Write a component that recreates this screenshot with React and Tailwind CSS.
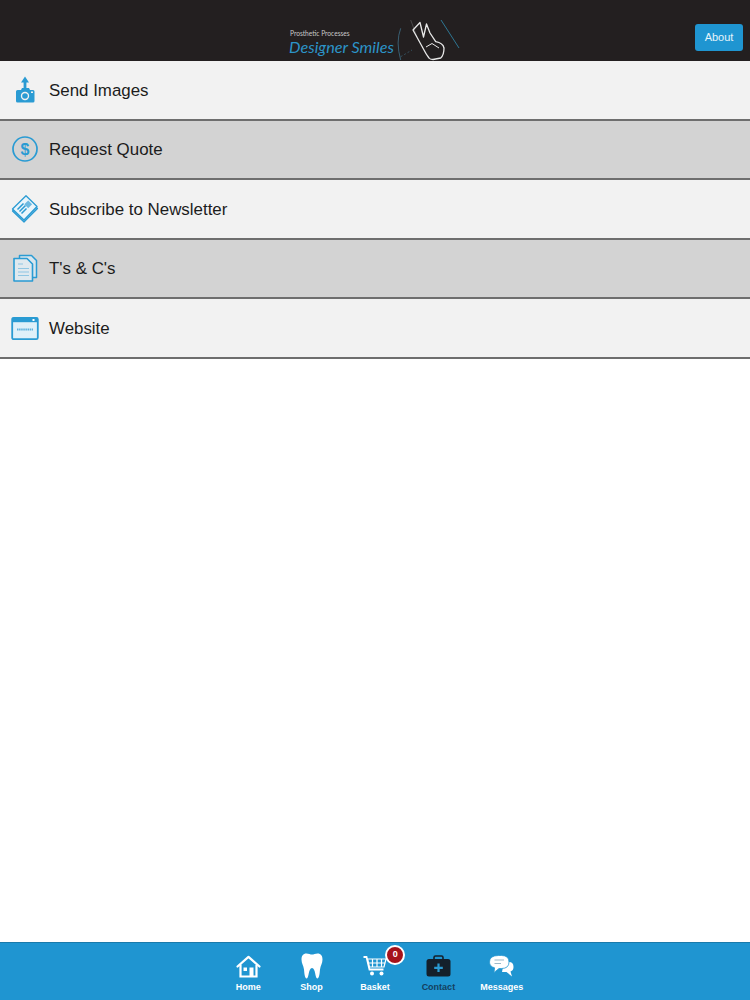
const BLUE = '#2a9bd3';

const CameraIcon = () => (
  <svg width="28" height="28" viewBox="0 0 28 28">
    <path d="M14 0.5 L18 6.5 H15.4 V12 H12.6 V6.5 H10 Z" fill={BLUE} />
    <path d="M6.5 14 H10 L11 12 H18 L19 14 H22 Q23.5 14 23.5 15.5 V25 Q23.5 26.5 22 26.5 H6.5 Q5 26.5 5 25 V15.5 Q5 14 6.5 14 Z" fill={BLUE} />
    <circle cx="14" cy="20" r="4.2" fill="#f1f1f1" />
    <circle cx="14" cy="20" r="2.8" fill={BLUE} />
    <rect x="20" y="15.5" width="2" height="1.5" fill="#f1f1f1" />
  </svg>
);

const DollarIcon = () => (
  <svg width="28" height="28" viewBox="0 0 28 28">
    <circle cx="14" cy="14" r="12" fill="none" stroke={BLUE} strokeWidth="1.7" />
    <text x="14" y="19.5" textAnchor="middle" fontSize="16" fontWeight="700" fill={BLUE} fontFamily="Liberation Sans, sans-serif">$</text>
  </svg>
);

const NewsIcon = () => (
  <svg width="28" height="28" viewBox="0 0 28 28">
    <path d="M1.5 16 L15 2.5 L26.5 13.5 L13 27 Z" fill="#7cc0e4" stroke={BLUE} strokeWidth="1.2" strokeLinejoin="round" />
    <path d="M1.5 14 L15 0.8 L26 11.5 L13 25 Z" fill="#eaf5fb" stroke={BLUE} strokeWidth="1.3" strokeLinejoin="round" />
    <path d="M6.5 14.5 L12.5 8.5 M8.5 16.5 L14.5 10.5 M10.5 18.5 L15.5 13.5" stroke={BLUE} strokeWidth="1.5" />
    <rect x="14.5" y="6.5" width="5.5" height="5.5" transform="rotate(45 17.2 9.2)" fill="#6db9e0" />
  </svg>
);

const DocsIcon = () => (
  <svg width="28" height="28" viewBox="0 0 28 28">
    <path d="M8.5 4 V1.5 H20.5 L25.5 6.5 V23.5 H22" fill="#d9e6ed" stroke={BLUE} strokeWidth="1.5" strokeLinejoin="round" />
    <path d="M3 4.5 H16 L21.5 10 V27 H3 Z" fill="#dfe9ef" stroke={BLUE} strokeWidth="1.6" strokeLinejoin="round" />
    <path d="M7 10 H12 M7 14.5 H18 M7 18 H18 M7 21.5 H18" stroke="#8fc6e3" strokeWidth="1.2" />
  </svg>
);

const WebIcon = () => (
  <svg width="28" height="28" viewBox="0 0 28 28">
    <rect x="1.2" y="3.8" width="25.6" height="21.4" rx="1.5" fill="#dff0f9" stroke={BLUE} strokeWidth="1.8" />
    <rect x="1.2" y="3.8" width="25.6" height="4.4" fill={BLUE} />
    <rect x="21.5" y="5" width="2" height="2" fill="#fff" />
    <path d="M6 15.5 H22" stroke="#5fb2dd" strokeWidth="2" strokeDasharray="1.5 0.6" />
  </svg>
);

const ToothIcon = () => (
  <svg width="22" height="26" viewBox="0 0 22 26">
    <path d="M5.5 0.5 C7.5 0.5 9.5 1.6 11 1.6 C12.5 1.6 14.5 0.5 16.5 0.5 C20 0.5 21.5 3 21.5 6.5 C21.5 10.5 19.5 12.5 19 16.5 C18.6 20 18.4 25.5 16.3 25.5 C14 25.5 14.7 15 11 15 C7.3 15 8 25.5 5.7 25.5 C3.6 25.5 3.4 20 3 16.5 C2.5 12.5 0.5 10.5 0.5 6.5 C0.5 3 2 0.5 5.5 0.5 Z" fill="#fff" />
  </svg>
);

const HomeIcon = () => (
  <svg width="25" height="23" viewBox="0 0 25 23" fill="none" stroke="#fff" strokeWidth="2.2">
    <path d="M1.5 11.5 L12.5 1.8 L23.5 11.5" strokeLinejoin="round" strokeLinecap="round" />
    <path d="M4.5 9.5 V21.5 H20.5 V9.5" />
    <rect x="7.5" y="12.5" width="3.5" height="3.5" fill="#fff" stroke="none" />
    <rect x="13.5" y="12.5" width="4" height="9" fill="#fff" stroke="none" />
  </svg>
);

const CartIcon = () => (
  <svg width="24" height="20" viewBox="0 0 24 20" fill="none" stroke="#fff">
    <path d="M0.5 1 H3.5 L6.5 13.5 H20.5" strokeWidth="1.8" />
    <path d="M4.5 3 H23 L21 11 H6.3 Z M9.5 3 V11 M14 3 V11 M18.5 3 V11 M5.4 7 H22" strokeWidth="1.2" />
    <circle cx="9" cy="17.5" r="2" fill="#fff" stroke="none" />
    <circle cx="18.5" cy="17.5" r="2" fill="#fff" stroke="none" />
  </svg>
);

const CaseIcon = () => (
  <svg width="25" height="22" viewBox="0 0 25 22">
    <path d="M8 5 V2.5 Q8 1 9.5 1 H15.5 Q17 1 17 2.5 V5" fill="none" stroke="#14202b" strokeWidth="1.6" />
    <rect x="0.5" y="4" width="24" height="17.5" rx="2.5" fill="#14202b" />
    <path d="M12.5 8.5 V17 M8.2 12.8 H16.8" stroke={BLUE} strokeWidth="2.2" />
  </svg>
);

const ChatIcon = () => (
  <svg width="25" height="22" viewBox="0 0 25 22">
    <path d="M15 7 H20 Q24.5 7 24.5 12 Q24.5 15.5 21.5 16.5 L23 21.5 L17.5 17 H13 Z" fill="#fff" />
    <path d="M9.5 0.5 H12.5 Q20 0.5 20 7 Q20 13.5 12.5 13.5 H10 L5 17.5 L5.6 12.8 Q0.5 11.5 0.5 7 Q0.5 0.5 9.5 0.5 Z" fill="#fff" stroke={BLUE} strokeWidth="0.8" />
    <path d="M5.5 5 H15 M5.5 8.5 H12" stroke="#9bb9c9" strokeWidth="1.1" />
  </svg>
);

const rows = [
  { label: 'Send Images', icon: <CameraIcon />, alt: false },
  { label: 'Request Quote', icon: <DollarIcon />, alt: true },
  { label: 'Subscribe to Newsletter', icon: <NewsIcon />, alt: false },
  { label: "T's & C's", icon: <DocsIcon />, alt: true },
  { label: 'Website', icon: <WebIcon />, alt: false },
];

const tabs = [
  { label: 'Home', icon: <HomeIcon /> },
  { label: 'Shop', icon: <ToothIcon /> },
  { label: 'Basket', icon: <CartIcon />, badge: '0' },
  { label: 'Contact', icon: <CaseIcon />, dark: true },
  { label: 'Messages', icon: <ChatIcon /> },
];

export default function App() {
  return (
    <div className="h-[1000px] flex flex-col bg-white font-['Liberation_Sans',Arial,sans-serif] overflow-hidden">
      {/* Header */}
      <header className="h-[61px] shrink-0 bg-[#231f20] flex items-end justify-center pb-[5px] relative">
        <div className="flex flex-col w-[108px] font-['Lato',sans-serif]">
          <span className="text-[6.6px] leading-[8px] text-[#c9c9c9] ml-[1px]">Prosthetic Processes</span>
          <span className="text-[16.2px] leading-[19px] italic text-[#2c94c8] whitespace-nowrap">Designer Smiles</span>
        </div>
        <svg width="64" height="44" viewBox="0 0 64 44" className="-mb-[5px]" fill="none">
          <path d="M3.7 11.3 Q-1.5 25 3.7 43" stroke="#3f6f86" strokeWidth="0.8" />
          <path d="M44 3 L62 31" stroke="#2f7f9f" strokeWidth="0.9" />
          <path d="M13.7 3 L20 20" stroke="#5c5c5c" strokeWidth="0.7" />
          <path d="M3.7 39.7 L15 33" stroke="#3f6f86" strokeWidth="0.6" strokeDasharray="2 2" />
          <path d="M16 13 L23 5.5 L26.5 20 L29.5 7 L33 16 L38.7 24.7 Q46 26 47 31 Q47 38 43.7 41 L36 42.5 Q33 42.5 32 41 Q29 37 27 33 Z" stroke="#e8e8e8" strokeWidth="1.3" strokeLinejoin="round" />
          <path d="M29 30 L35 26.5 L42 31" stroke="#e8e8e8" strokeWidth="1" />
        </svg>
        <button className="absolute right-[7px] top-[24px] w-[48px] h-[27px] rounded-[3px] bg-[#1f95d1] text-[#e6f4fb] text-[11px]">
          About
        </button>
      </header>

      {/* Menu */}
      <div className="flex flex-col">
        {rows.map((row) => (
          <div
            key={row.label}
            className={`h-[59.5px] flex items-center pl-[11px] gap-[10px] border-b-2 border-[#6e6e6e] ${
              row.alt ? 'bg-[#d3d3d3]' : 'bg-[#f2f2f2]'
            }`}
          >
            <div className="w-[28px] h-[28px] shrink-0">{row.icon}</div>
            <span className="text-[16.9px] mt-[1px] text-[#1c1c1c]">{row.label}</span>
          </div>
        ))}
      </div>

      {/* Tab bar */}
      <nav className="mt-auto h-[58px] shrink-0 bg-[#1f95d1] border-t border-[#1a7aab] flex justify-center">
        {tabs.map((tab) => (
          <div key={tab.label} className="w-[63.4px] flex flex-col items-center pt-[10px] relative">
            <div className="h-[26px] flex items-center justify-center">{tab.icon}</div>
            <span className={`text-[9px] font-bold mt-[3px] leading-[10px] ${tab.dark ? 'text-[#14405f]' : 'text-white'}`}>
              {tab.label}
            </span>
            {tab.badge && (
              <span className="absolute top-[2px] left-[42px] w-[20px] h-[20px] rounded-full bg-[#a5121b] border-2 border-white text-white text-[9px] font-bold flex items-center justify-center">
                {tab.badge}
              </span>
            )}
          </div>
        ))}
      </nav>
    </div>
  );
}
